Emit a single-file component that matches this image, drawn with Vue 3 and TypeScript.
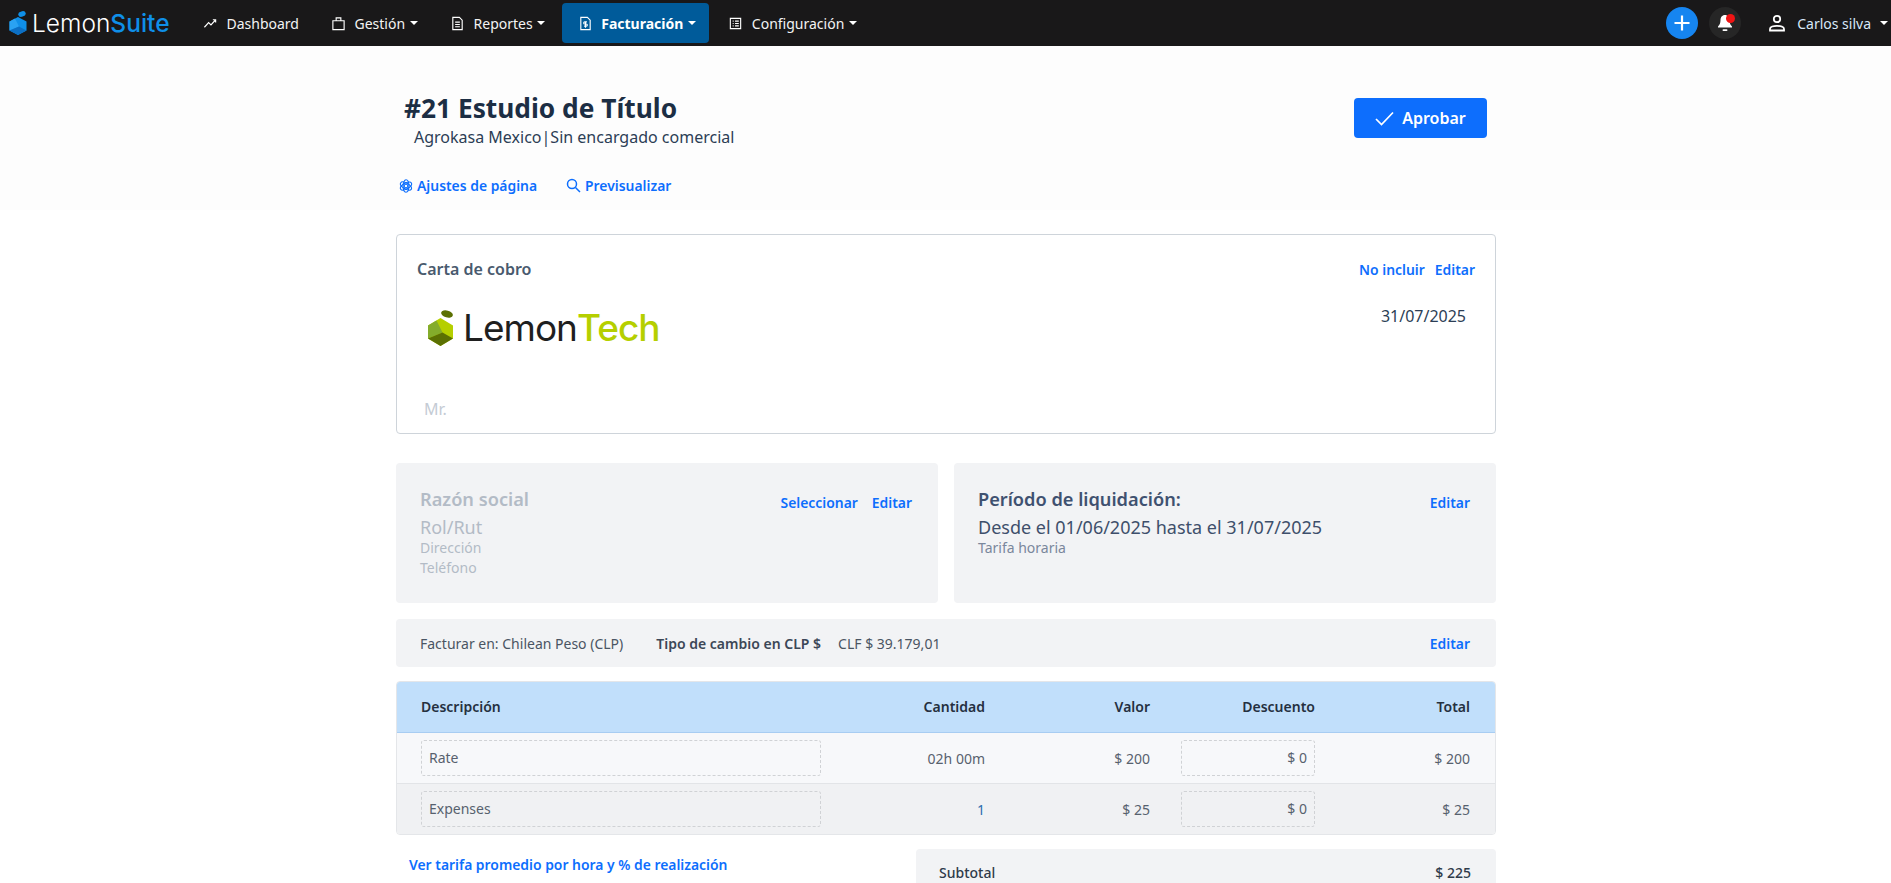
<template>
  <div class="page">
    <nav class="navbar">
      <div class="brand">
        <svg width="18" height="24" viewBox="0 0 18 24">
          <ellipse cx="13" cy="3" rx="3.800" ry="2.700" fill="#0f8fe8" transform="rotate(-15 13 3)" />
          <path d="M9 6 17.500 10.500v9L9 24 .5 19.500v-9z" fill="#0f8fe8" />
          <path d="M.5 10.500 6 7.500l4 8-9.500 4z" fill="#2aa2f2" />
          <path d="M.5 19.500l9.500-4 7.500 4L9 24z" fill="#0c6fc4" />
        </svg>
        <span class="brand-text">Lemon<b>Suite</b></span>
      </div>
      <div class="nav-items">
        <a
          v-for="item in navItems"
          :key="item.label"
          class="nav-item"
          :class="{ active: item.active }"
        >
          <svg class="nav-icon" viewBox="0 0 16 16" fill="none" stroke="#fff" stroke-width="1.200">
            <path :d="item.icon" />
          </svg>
          <span>{{ item.label }}</span>
          <i v-if="item.caret" class="caret"></i>
        </a>
      </div>
      <div class="nav-right">
        <button class="round plus">
          <svg width="18" height="18" viewBox="0 0 18 18" stroke="#fff" stroke-width="2.200">
            <path d="M9 1.500v15M1.500 9h15" />
          </svg>
        </button>
        <button class="round bell">
          <svg width="16" height="18" viewBox="0 0 16 18" fill="#fff">
            <path d="M8 1c3 0 4.500 2.400 4.500 5.200 0 3 1 4.600 2.500 6.300v1H1v-1c1.500-1.700 2.500-3.300 2.500-6.300C3.500 3.400 5 1 8 1z" />
            <rect x="5.500" y="15.200" width="5" height="1.800" rx="0.900" />
          </svg>
          <i class="dot"></i>
        </button>
        <div class="user">
          <svg width="18" height="18" viewBox="0 0 18 18" fill="none" stroke="#fff" stroke-width="1.800">
            <circle cx="9" cy="5" r="3.200" />
            <path d="M2 16.500v-1.500c0-2 3.500-3.200 7-3.200s7 1.200 7 3.200v1.500z" />
          </svg>
          <span>Carlos silva</span>
          <i class="caret user-caret"></i>
        </div>
      </div>
    </nav>

    <header class="top">
      <div class="container">
        <div class="title-row">
          <div>
            <h1>#21 Estudio de Título</h1>
            <p class="subtitle">Agrokasa Mexico<span class="sep">|</span>Sin encargado comercial</p>
          </div>
          <button class="approve">
            <svg width="19" height="15" viewBox="0 0 19 15" fill="none" stroke="#fff" stroke-width="1.700">
              <path d="M1 8l5.500 5.500L18 1.500" />
            </svg>
            Aprobar
          </button>
        </div>
        <div class="page-links">
          <a class="link">
            <svg width="14" height="14" viewBox="0 0 14 14" fill="none" stroke="#0d6efd" stroke-width="1.100">
              <ellipse cx="7" cy="7" rx="2.900" ry="6.200" />
              <ellipse cx="7" cy="7" rx="2.900" ry="6.200" transform="rotate(60 7 7)" />
              <ellipse cx="7" cy="7" rx="2.900" ry="6.200" transform="rotate(120 7 7)" />
              <circle cx="7" cy="7" r="1.800" />
            </svg>
            Ajustes de página
          </a>
          <a class="link">
            <svg width="15" height="15" viewBox="0 0 15 15" fill="none" stroke="#0d6efd" stroke-width="1.500">
              <circle cx="6" cy="6" r="4.500" />
              <path d="M9.500 9.500 14 14" />
            </svg>
            Previsualizar
          </a>
        </div>
      </div>
    </header>

    <main class="container content">
      <section class="letter">
        <div class="letter-head">
          <h2>Carta de cobro</h2>
          <div class="actions">
            <a class="link">No incluir</a>
            <a class="link">Editar</a>
          </div>
        </div>
        <div class="letter-body">
          <div class="logo">
            <svg width="26" height="36" viewBox="0 0 26 36">
              <ellipse cx="19" cy="4" rx="6" ry="3.400" fill="#5b7003" transform="rotate(15 19 4)" />
              <path d="M12.500 8 25 15.500v13L12.500 36 0 28.500v-13z" fill="#b5cf00" />
              <path d="M0 15.500 8.500 10.500l6 12L0 28.500z" fill="#84ac2b" />
              <path d="M0 28.500 14.500 22.500 25 28.500 12.500 36z" fill="#5b7003" />
            </svg>
            <span class="logo-text">Lemon<b>Tech</b></span>
          </div>
          <span class="date">31/07/2025</span>
        </div>
        <p class="mr">Mr.</p>
      </section>

      <div class="panels">
        <section class="panel">
          <div class="panel-text muted">
            <h3>Razón social</h3>
            <p class="big">Rol/Rut</p>
            <p class="small">Dirección</p>
            <p class="small">Teléfono</p>
          </div>
          <div class="actions panel-actions">
            <a class="link">Seleccionar</a>
            <a class="link">Editar</a>
          </div>
        </section>
        <section class="panel">
          <div class="panel-text">
            <h3>Período de liquidación:</h3>
            <p class="big">Desde el 01/06/2025 hasta el 31/07/2025</p>
            <p class="small">Tarifa horaria</p>
          </div>
          <div class="actions panel-actions">
            <a class="link">Editar</a>
          </div>
        </section>
      </div>

      <div class="currency">
        <span>Facturar en: Chilean Peso (CLP)</span>
        <strong>Tipo de cambio en CLP $</strong>
        <span class="rate">CLF $ 39.179,01</span>
        <a class="link">Editar</a>
      </div>

      <div class="table">
        <div class="row head">
          <div>Descripción</div>
          <div class="num">Cantidad</div>
          <div class="num">Valor</div>
          <div class="num">Descuento</div>
          <div class="num">Total</div>
        </div>
        <div v-for="row in rows" :key="row.name" class="row body">
          <div><div class="editable">{{ row.name }}</div></div>
          <div class="num" :class="{ blue: row.qty === '1' }">{{ row.qty }}</div>
          <div class="num">{{ row.value }}</div>
          <div class="discount"><div class="editable num">$ 0</div></div>
          <div class="num">{{ row.total }}</div>
        </div>
      </div>

      <div class="bottom">
        <a class="link avg">Ver tarifa promedio por hora y % de realización</a>
        <div class="totals">
          <span>Subtotal</span>
          <span>$ 225</span>
        </div>
      </div>
    </main>
  </div>
</template>

<script setup lang="ts">
interface NavItem {
  label: string;
  icon: string;
  caret: boolean;
  active?: boolean;
}

const navItems: NavItem[] = [
  { label: 'Dashboard', icon: 'M1.500 12 6 7l2.500 2.500L13.500 4M10.500 4h3v3', caret: false },
  { label: 'Gestión', icon: 'M2 5h12v9.500H2zM5.500 5V2h5v3', caret: true },
  { label: 'Reportes', icon: 'M3 1.500h7L13 4.500v10H3zM5.500 6.500h5M5.500 9h5M5.500 11.500h5', caret: true },
  { label: 'Facturación', icon: 'M3 1.500h7L13 4.500v10H3zM8 5.500v7M6.500 10.800h2.300a1 1 0 0 0 0-2.300H7.200a1 1 0 0 1 0-2.300h2.300', caret: true, active: true },
  { label: 'Configuración', icon: 'M2.500 2.500h11v11h-11zM5 5.500h1M7.500 5.500h4M5 8h1M7.500 8h4M5 10.500h1M7.500 10.500h4', caret: true }
];

const rows = [
  { name: 'Rate', qty: '02h 00m', value: '$ 200', total: '$ 200' },
  { name: 'Expenses', qty: '1', value: '$ 25', total: '$ 25' }
];
</script>

<style>
html,
body {
  margin: 0;
  background: #fff;
  overflow: hidden;
}
</style>

<style scoped>
.page {
  height: 883px;
  overflow: hidden;
  font-family: 'Noto Sans', 'Open Sans', sans-serif;
  font-size: 14px;
  color: #2c3e55;
}

.navbar {
  display: flex;
  align-items: center;
  height: 46px;
  background: #191819;
  color: #fff;
}

.brand {
  display: flex;
  align-items: center;
  gap: 5px;
  width: 187px;
  padding-left: 9px;
  box-sizing: border-box;
}

.brand-text {
  font-family: Inter, sans-serif;
  font-size: 24.500px;
  font-weight: 300;
  line-height: 1;
  color: #fff;
}

.brand-text b {
  font-weight: 500;
  color: #0f8fe8;
}

.nav-items {
  display: flex;
  align-items: center;
  gap: 3px;
  height: 40px;
}

.nav-item {
  display: flex;
  align-items: center;
  gap: 8.500px;
  height: 40px;
  padding: 0 13.500px 0 16px;
  border-radius: 4px;
  font-size: 14px;
  color: #f3f3f3;
}

.nav-item:first-child {
  padding-right: 13px;
}

.nav-item.active {
  background: #005b9a;
  font-weight: 700;
  color: #fff;
}

.nav-icon {
  width: 15px;
  height: 15px;
}

.caret {
  display: inline-block;
  margin-left: -4px;
  border-top: 4px solid #fff;
  border-left: 4px solid transparent;
  border-right: 4px solid transparent;
}

.nav-right {
  display: flex;
  align-items: center;
  margin-left: auto;
}

.round {
  position: relative;
  display: flex;
  align-items: center;
  justify-content: center;
  width: 32px;
  height: 32px;
  padding: 0;
  border: 0;
  border-radius: 50%;
}

.plus {
  background: #1685f0;
  margin-right: 11px;
}

.bell {
  background: #262626;
}

.dot {
  position: absolute;
  top: 7px;
  right: 6px;
  width: 9px;
  height: 9px;
  border-radius: 50%;
  background: #f01414;
}

.user {
  display: flex;
  align-items: center;
  gap: 11px;
  margin-left: 27px;
  margin-right: 3px;
  font-size: 14px;
  color: #d8e8f8;
}

.user-caret {
  margin-left: -2px;
}

.container {
  width: 1100px;
  margin-left: 396px;
}

.top {
  height: 164px;
  background: #fdfdfd;
}

.title-row {
  display: flex;
  justify-content: space-between;
  padding: 45px 9px 0 8px;
}

h1 {
  margin: 0;
  font-size: 26.300px;
  line-height: 34px;
  font-weight: 700;
  color: #1c2e44;
}

.subtitle {
  margin: 1px 0 0;
  padding-left: 10px;
  font-size: 16px;
  line-height: 22px;
}

.approve {
  display: flex;
  align-items: center;
  justify-content: center;
  gap: 8px;
  width: 133px;
  height: 40px;
  margin: 7px 0 0;
  border: 0;
  border-radius: 4px;
  background: #0d6efd;
  color: #fff;
  font-family: inherit;
  font-size: 16px;
  font-weight: 600;
}

.page-links {
  display: flex;
  gap: 29px;
  margin-top: 28px;
  padding-left: 3px;
}

.link {
  display: inline-flex;
  align-items: center;
  gap: 4px;
  color: #0d6efd;
  font-size: 13.900px;
  font-weight: 600;
  white-space: nowrap;
}

.content {
  padding-top: 24px;
}

.letter {
  box-sizing: border-box;
  height: 200px;
  padding: 23px 20px 0 20px;
  border: 1px solid #ced4da;
  border-radius: 4px;
}

.letter-head {
  display: flex;
  justify-content: space-between;
  align-items: center;
}

h2 {
  margin: 0;
  font-size: 16px;
  font-weight: 600;
  color: #495a6e;
}

.actions {
  display: flex;
  gap: 10px;
}

.letter-body {
  display: flex;
  justify-content: space-between;
  padding: 29px 9px 0 11px;
}

.logo {
  display: flex;
  align-items: center;
  gap: 9px;
}

.logo-text {
  font-family: Inter, sans-serif;
  font-size: 37px;
  font-weight: 400;
  line-height: 38px;
  color: #1f1f1f;
  letter-spacing: -1px;
}

.logo-text b {
  font-weight: 500;
  color: #b5cf00;
}

.date {
  margin-top: -4px;
  font-size: 16px;
}

.mr {
  margin: 51px 0 0 7px;
  font-size: 16px;
  color: #c4cbd4;
}

.panels {
  display: grid;
  grid-template-columns: 542px 542px;
  gap: 16px;
  margin-top: 29px;
}

.panel {
  display: flex;
  justify-content: space-between;
  box-sizing: border-box;
  height: 140px;
  padding: 21px 26px 0 24px;
  background: #f2f3f5;
  border-radius: 4px;
}

.panel-text h3 {
  margin: 0;
  font-size: 18.200px;
  line-height: 30px;
  font-weight: 600;
  color: #3f5170;
}

.panel-text p {
  margin: 0;
}

.panel-text .big {
  margin-bottom: -2px;
  font-size: 18px;
  line-height: 26px;
  color: #3e4f6b;
}

.small {
  font-size: 14px;
  line-height: 20px;
}

.panel-text > .small {
  color: #7a879c;
}

.panel-text.muted h3,
.panel-text.muted .big,
.panel-text.muted > .small {
  color: #b3bbc6;
}

.panel-actions {
  gap: 14px;
  padding-top: 8px;
  height: 20px;
}

.currency {
  display: flex;
  align-items: center;
  height: 48px;
  margin-top: 16px;
  padding: 0 26px 0 24px;
  background: #f2f3f5;
  border-radius: 4px;
  font-size: 14px;
  color: #4a5563;
}

.currency strong {
  margin-left: 33px;
  font-weight: 600;
  color: #3c4757;
}

.rate {
  margin-left: 17px;
}

.currency .link {
  margin-left: auto;
}

.table {
  margin-top: 14px;
  border: 1px solid #e4e6e9;
  border-radius: 4px;
  overflow: hidden;
}

.row {
  display: grid;
  grid-template-columns: 400px 164px 165px 165px 155px;
  align-items: center;
  padding: 0 25px 0 24px;
  font-size: 14px;
}

.discount {
  padding-left: 31px;
}

.num {
  text-align: right;
}

.head {
  box-sizing: border-box;
  height: 51px;
  padding-bottom: 2px;
  background: #c1dffb;
  border-bottom: 1px solid #a8cdf2;
  font-weight: 600;
  color: #25303f;
}

.body {
  height: 50px;
  color: #57616e;
  background: #f7f8fa;
}

.body + .body {
  border-top: 1px solid #e2e4e7;
  background: #f0f1f3;
}

.editable {
  box-sizing: border-box;
  height: 36px;
  line-height: 34px;
  padding: 0 7px;
  border: 1px dashed #d0d2d5;
  border-radius: 3px;
}

.blue {
  color: #2e6db0;
}

.bottom {
  display: flex;
  justify-content: space-between;
  margin-top: 14px;
}

.avg {
  align-self: flex-start;
  margin: 6px 0 0 13px;
}

.totals {
  display: flex;
  justify-content: space-between;
  box-sizing: border-box;
  width: 580px;
  height: 120px;
  padding: 14px 25px 0 23px;
  background: #f2f3f5;
  border-radius: 4px;
  font-weight: 500;
  color: #2f3b4a;
}
</style>
